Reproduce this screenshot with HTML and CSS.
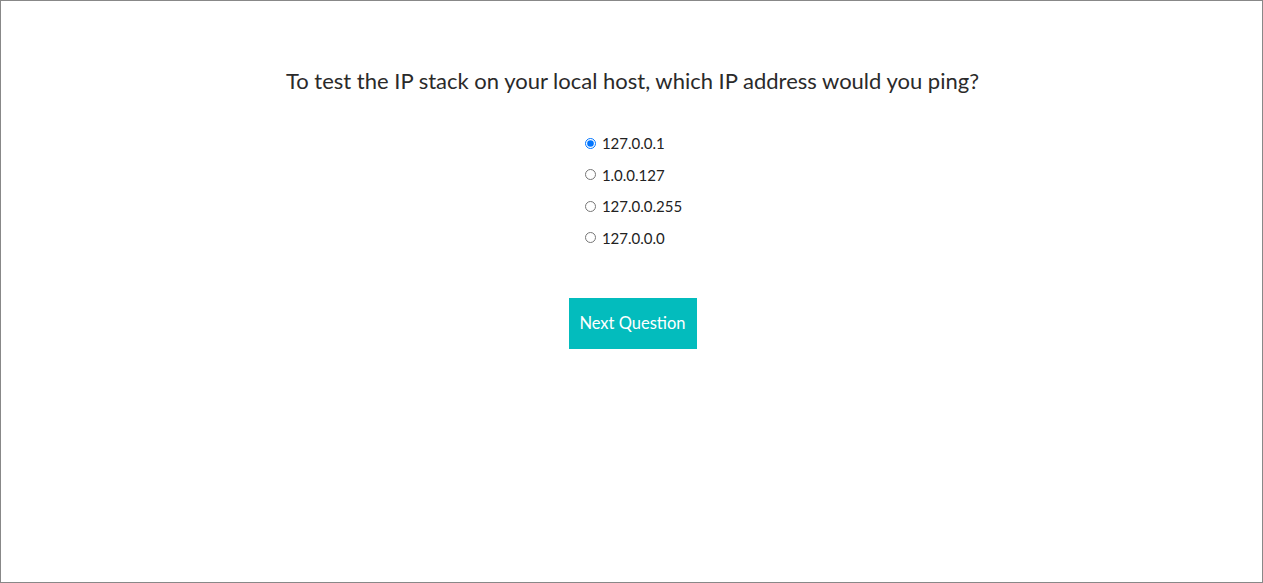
FILE: index.html
```html
<!DOCTYPE html>
<html>
<head>
<meta charset="utf-8">
<link rel="stylesheet" href="styles.css">
</head>
<body>
<div class="frame">
  <main class="quiz">
    <h1 class="question">To test the IP stack on your local host, which IP address would you ping?</h1>
    <form class="options">
      <label class="option"><input type="radio" name="a" checked><span>127.0.0.1</span></label>
      <label class="option"><input type="radio" name="a"><span>1.0.0.127</span></label>
      <label class="option"><input type="radio" name="a"><span>127.0.0.255</span></label>
      <label class="option"><input type="radio" name="a"><span>127.0.0.0</span></label>
    </form>
    <button class="next" type="button">Next Question</button>
  </main>
</div>
</body>
</html>
```
FILE: styles.css
```css
html, body {
  margin: 0;
  padding: 0;
  height: 100%;
}
body {
  font-family: "Lato", "Liberation Sans", sans-serif;
  color: #222;
  background: #fff;
}
.frame {
  box-sizing: border-box;
  height: 583px;
  border: 1px solid #888;
}
.quiz {
  display: flex;
  flex-direction: column;
  align-items: center;
  padding-top: 64px;
  padding-left: 2px;
}
.question {
  margin: 0;
  font-weight: 400;
  font-size: 22px;
  line-height: 32px;
  color: #2a2a2a;
}
.options {
  display: flex;
  flex-direction: column;
  gap: 9.5px;
  margin-top: 35px;
  margin-left: 2px;
}
.option {
  display: flex;
  align-items: center;
  font-size: 15px;
  line-height: 22px;
  color: #222;
}
.option input {
  margin: 0 6px 0 0;
  width: 11px;
  height: 11px;
}
.next {
  margin-top: 49px;
  width: 128px;
  height: 51px;
  border: none;
  background: #03bcbd;
  color: #fff;
  font-family: inherit;
  font-size: 16.5px;
  padding: 0;
}
```
